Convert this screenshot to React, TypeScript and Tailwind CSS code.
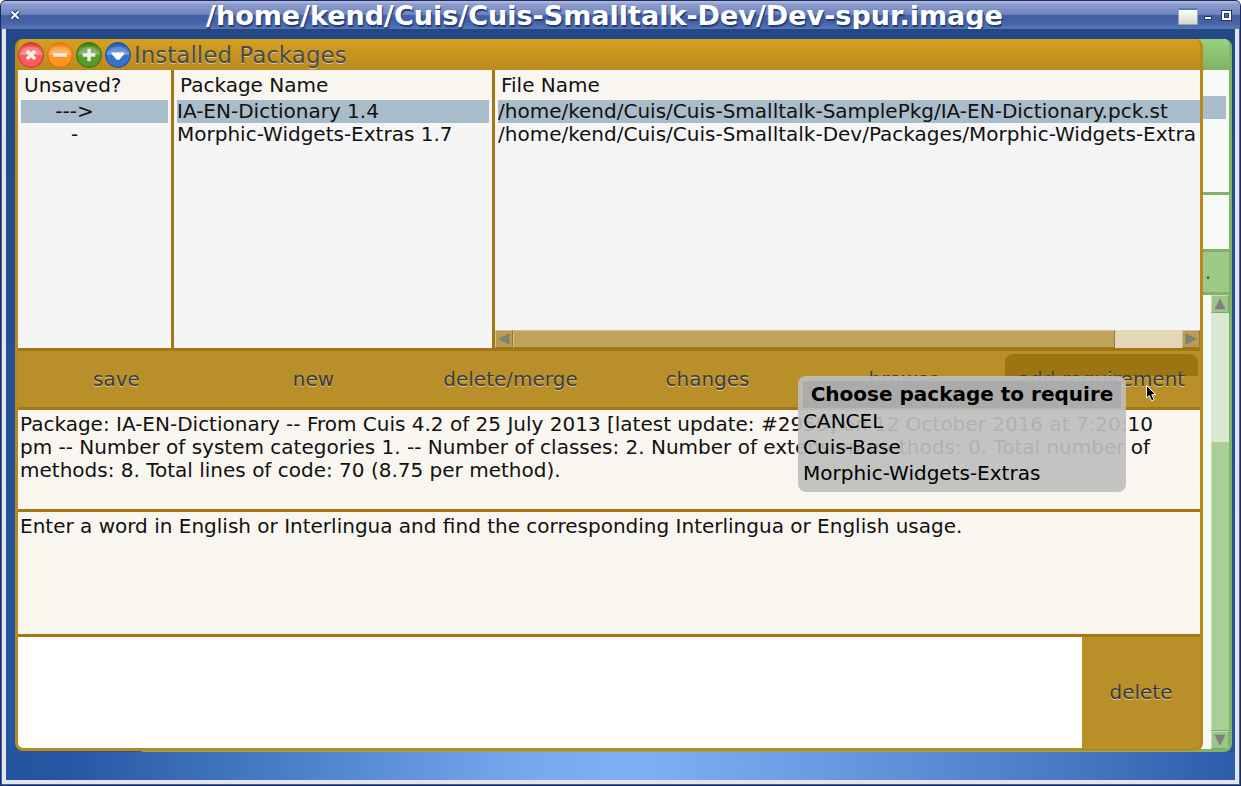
import React from "react";

type Pkg = { flag: string; name: string; file: string };

const packages: Pkg[] = [
  { flag: "--->", name: "IA-EN-Dictionary 1.4", file: "/home/kend/Cuis/Cuis-Smalltalk-SamplePkg/IA-EN-Dictionary.pck.st" },
  { flag: "-", name: "Morphic-Widgets-Extras 1.7", file: "/home/kend/Cuis/Cuis-Smalltalk-Dev/Packages/Morphic-Widgets-Extra" },
];

const actions = ["save", "new", "delete/merge", "changes", "browse"];
const choices = ["CANCEL", "Cuis-Base", "Morphic-Widgets-Extras"];

const embossed = "text-[#3c3b38] [text-shadow:0_1px_0_#d9c9a0]";

function Orb({ id, label, top, mid, base, children }: {
  id: string; label: string; top: string; mid: string; base: string; children: React.ReactNode;
}) {
  return (
    <button aria-label={label} className="block size-[26px]">
      <svg viewBox="0 0 27 27" className="size-full">
        <defs>
          <linearGradient id={id} x1="0" y1="0" x2="0" y2="1">
            <stop offset="0" stopColor={base} />
            <stop offset="0.2" stopColor={mid} />
            <stop offset="0.48" stopColor={top} />
            <stop offset="0.52" stopColor={mid} />
            <stop offset="1" stopColor={mid} />
          </linearGradient>
        </defs>
        <circle cx="13.5" cy="13.5" r="12.7" fill={`url(#${id})`} stroke={base} strokeWidth="1.4" />
        <path d="M3.5 12 A10.5 10.5 0 0 1 23.5 12 Q13.5 14.5 3.5 12Z" fill="#fff" opacity="0.18" />
        {children}
      </svg>
    </button>
  );
}

function Arrow({ dir }: { dir: "left" | "right" | "up" | "down" }) {
  const d = {
    left: "M1 6 L11 1 V11Z",
    right: "M11 6 L1 1 V11Z",
    up: "M6 1 L11 11 H1Z",
    down: "M6 11 L1 1 H11Z",
  }[dir];
  return (
    <svg viewBox="0 0 12 12" className="size-3">
      <path d={d} fill="#808080" stroke="#74716a" strokeWidth="0.5" />
    </svg>
  );
}

function HostTitleBar() {
  return (
    <header className="flex h-[29px] items-center rounded-t-[5px] border-t border-[#1c2b5c] bg-[linear-gradient(#b5c1e2_0%,#8c9ccd_12%,#6f84be_48%,#4460a5_52%,#4361a6_75%,#5a76b4_100%)] pt-0.5 pr-1.5 pl-2">
      <button aria-label="Close" className="size-3.5">
        <svg viewBox="0 0 14 14" className="size-full">
          <path d="M2.5 2.5 L9.5 9.5 M9.5 2.5 L2.5 9.5" stroke="#22366f" strokeWidth="4" />
          <path d="M2.5 2.5 L9.5 9.5 M9.5 2.5 L2.5 9.5" stroke="#fff" strokeWidth="2" />
        </svg>
      </button>
      <h1 className="flex-1 pl-2 text-center text-[27px] leading-[26px] font-bold whitespace-nowrap text-white [text-shadow:1px_2px_1px_#243a76]">
        /home/kend/Cuis/Cuis-Smalltalk-Dev/Dev-spur.image
      </h1>
      <div className="flex h-full items-center">
        <span className="mr-1.5 flex h-[17px] w-5 rounded-[1px] border border-t-2 border-[#9aa3a8] border-t-[#5480b0] bg-[linear-gradient(#fff,#d5d7d0)]" />
        <button aria-label="Minimize" className="size-4">
          <svg viewBox="0 0 16 16" className="size-full">
            <rect x="0" y="8" width="8" height="4" fill="#22366f" />
            <rect x="1" y="9" width="6" height="2" fill="#fff" />
          </svg>
        </button>
        <button aria-label="Maximize" className="size-3.5">
          <svg viewBox="0 0 14 14" className="size-full">
            <rect x="3" y="3" width="7" height="7" fill="none" stroke="#22366f" strokeWidth="4" />
            <rect x="3" y="3" width="7" height="7" fill="none" stroke="#fff" strokeWidth="2" />
          </svg>
        </button>
      </div>
    </header>
  );
}

function BackWindow() {
  return (
    <section aria-label="Browser" className="absolute top-[10px] right-[3px] bottom-7 left-[130px] flex flex-col overflow-hidden rounded-lg border-x-3 border-b-3 border-[#80b267] bg-[#f5faf4]">
      <div className="h-[31px] shrink-0 bg-[linear-gradient(#97d37c,#80b267)]" />
      <div className="h-[122px] shrink-0 pt-[26px] pr-[3px]">
        <div className="h-[23px] bg-[#a9bccb]" />
      </div>
      <div className="h-[60px] shrink-0 border-y-3 border-[#80b267]" />
      <div className="flex h-[43px] shrink-0 justify-end border-b-3 border-[#80b267] bg-[#9dca86] pr-[18px] text-[20px] leading-10 text-[#45443f]">...</div>
      <div className="flex flex-1 justify-end">
        <div className="flex w-[18px] flex-col bg-[#a9ce96]">
          <div className="flex h-[18px] items-center justify-center border border-[#c3dfb3] border-r-[#80a76d] border-b-[#80a76d] bg-[#9dc58b]"><Arrow dir="up" /></div>
          <div className="h-[129px] bg-[#d9e8d1]" />
          <div className="flex-1 border-b border-l border-[#c3dfb3] border-b-[#80a76d]" />
          <div className="flex h-[18px] items-center justify-center border border-[#c3dfb3] border-r-[#80a76d] border-b-[#80a76d] bg-[#9dc58b]"><Arrow dir="down" /></div>
        </div>
      </div>
    </section>
  );
}

function PackageTable() {
  return (
    <table className="h-[278px] w-full table-fixed border-separate border-spacing-0 bg-[#f5f5f5] text-left">
      <colgroup>
        <col className="w-[156px]" />
        <col className="w-[321px]" />
        <col />
      </colgroup>
      <thead>
        <tr className="h-[30px] bg-[#f9f6ef]">
          <th className="border-r-3 border-[#a37814] p-0 pl-1.5 font-normal">Unsaved?</th>
          <th className="border-r-3 border-[#a37814] p-0 pl-1.5 font-normal">Package Name</th>
          <th className="p-0 pl-1.5 font-normal">File Name</th>
        </tr>
      </thead>
      <tbody>
        {packages.map((p, i) => {
          const tone = i === 0 ? "bg-[#a9bcc9]" : "";
          return (
            <tr key={p.name} className="h-[23px]">
              <td className="border-r-3 border-[#a37814] p-0 px-[3px]">
                <div className={`h-[23px] pr-10 text-center ${tone}`}>{p.flag}</div>
              </td>
              <td className="border-r-3 border-[#a37814] p-0 px-[3px]">
                <div className={`h-[23px] whitespace-nowrap ${tone}`}>{p.name}</div>
              </td>
              <td className="p-0 pl-[3px]">
                <div className={`h-[23px] overflow-hidden whitespace-nowrap ${tone}`}>{p.file}</div>
              </td>
            </tr>
          );
        })}
        <tr>
          <td className="border-r-3 border-[#a37814] p-0" />
          <td className="border-r-3 border-[#a37814] p-0" />
          <td className="p-0 align-bottom">
            <div className="flex h-[18px] bg-[#e4d6b9]">
              <button aria-label="Scroll left" className="flex w-[18px] items-center justify-center border border-[#d3c08c] border-r-[#94783a] border-b-[#94783a] bg-[#b99c53]"><Arrow dir="left" /></button>
              <div className="flex-1">
                <div className="h-full w-[90%] border border-[#d3c08c] border-r-[#94783a] border-b-[#94783a] bg-[#c0a45c]" />
              </div>
              <button aria-label="Scroll right" className="flex w-[18px] items-center justify-center border border-[#d3c08c] border-r-[#94783a] border-b-[#94783a] bg-[#b99c53]"><Arrow dir="right" /></button>
            </div>
          </td>
        </tr>
      </tbody>
    </table>
  );
}

function RequireMenu() {
  return (
    <div role="menu" aria-label="Choose package to require" className="pointer-events-auto absolute top-[25px] right-[74px] flex w-[328px] flex-col rounded-lg bg-[#bebebe]/92 p-[5px] pb-1.5 text-black">
      <div className="h-[27px] bg-[#aaaaaa]/90 text-center leading-[26px] font-bold whitespace-nowrap">Choose package to require</div>
      {choices.map((c) => (
        <button key={c} role="menuitem" className="h-[26px] text-left leading-[26px] whitespace-nowrap">{c}</button>
      ))}
    </div>
  );
}

function Pointer() {
  return (
    <svg viewBox="0 0 11 17" className="absolute top-[34px] right-[43px] h-[17px] w-[11px]">
      <path d="M0.5 0.5 V13 L3.3 10.6 L5.6 15.8 L8 14.7 L5.8 9.7 H9.8Z" fill="#000" stroke="#fff" strokeWidth="1" />
    </svg>
  );
}

function PackagesWindow() {
  return (
    <section aria-label="Installed Packages" className="relative flex flex-1 flex-col overflow-hidden rounded-lg border-x-3 border-b-3 border-[#b8891d] bg-[#b88f28]">
      <div className="flex h-[31px] shrink-0 items-center gap-[3px] bg-[linear-gradient(#d5a022,#b8891d)]">
        <Orb id="close" label="Close" top="#ef8d8d" mid="#ff5a5a" base="#cf3c3c">
          <path d="M9.3 9.3 L17.7 17.7 M17.7 9.3 L9.3 17.7" stroke="#f2eeee" strokeWidth="3.6" />
        </Orb>
        <Orb id="collapse" label="Collapse" top="#f9b060" mid="#ff941f" base="#dd7710">
          <path d="M6.5 13.5 H20.5" stroke="#f2eeee" strokeWidth="3.4" />
        </Orb>
        <Orb id="expand" label="Expand" top="#7caa5c" mid="#579b2a" base="#3c7518">
          <path d="M7 13.5 H20 M13.5 7 V20" stroke="#f2eeee" strokeWidth="3.6" />
        </Orb>
        <Orb id="menu" label="Window menu" top="#6f98d2" mid="#3572cc" base="#2656a2">
          <path d="M7 11 H20 V12.5 L15 18.5 H12 L7 12.5Z" fill="#fff" />
        </Orb>
        <h2 className="text-[23px] leading-7 text-[#4d4b45] [text-shadow:0_1px_0_#d8c9a0]">Installed Packages</h2>
      </div>
      <PackageTable />
      <div className="relative grid h-[62px] shrink-0 grid-cols-6 border-y-3 border-[#a37814]">
        {actions.map((a) => (
          <button key={a} className={embossed}>{a}</button>
        ))}
        <button className={`mx-0.5 mt-[3px] rounded-t-lg bg-[linear-gradient(#9d7412_22px,transparent_22px)] pb-[3px] whitespace-nowrap ${embossed}`}>add requirement</button>
        <div className="pointer-events-none absolute inset-0 z-10">
          <RequireMenu />
          <Pointer />
        </div>
      </div>
      <p className="h-[99px] shrink-0 bg-[#f9f6ef] pt-[3px] pr-8 pl-0.5">
        Package: IA-EN-Dictionary -- From Cuis 4.2 of 25 July 2013 [latest update: #2950] on 12 October 2016 at 7:20:10 pm -- Number of system categories 1. -- Number of classes: 2. Number of extension methods: 0. Total number of methods: 8. Total lines of code: 70 (8.75 per method).
      </p>
      <textarea
        aria-label="Package description"
        className="block h-32 w-full shrink-0 resize-none border-y-3 border-[#a37814] bg-[#f9f6ef] px-0.5 pt-[3px] outline-none"
        defaultValue="Enter a word in English or Interlingua and find the corresponding Interlingua or English usage."
      />
      <div className="flex flex-1">
        <ul aria-label="Requirements" className="flex-1 bg-white" />
        <button className={`w-[118px] ${embossed}`}>delete</button>
      </div>
    </section>
  );
}

export default function App() {
  return (
    <div className="flex min-h-screen flex-col rounded-t-md border border-t-0 border-[#1c2b5c] bg-[#e4e5e9] font-['DejaVu_Sans',sans-serif] text-[20px] leading-[23px] text-[#111]">
      <HostTitleBar />
      <div className="flex flex-1 flex-col border border-t-0 border-[#4163ae] px-1 pb-1">
        <main className="relative flex flex-1 flex-col bg-[linear-gradient(90deg,#24549d_0%,#2657a4_5%,#5185cf_26%,#76a8ee_42%,#80b0f4_51%,#6d9fe6_64%,#4a7cc6_85%,#2b5dab_100%)] pt-[10px] pr-8 pb-[29px] pl-[9px]">
          <div className="pointer-events-none absolute inset-x-0 top-0 bottom-7 bg-[linear-gradient(#224986,#2457a3)]" />
          <BackWindow />
          <PackagesWindow />
        </main>
      </div>
    </div>
  );
}
